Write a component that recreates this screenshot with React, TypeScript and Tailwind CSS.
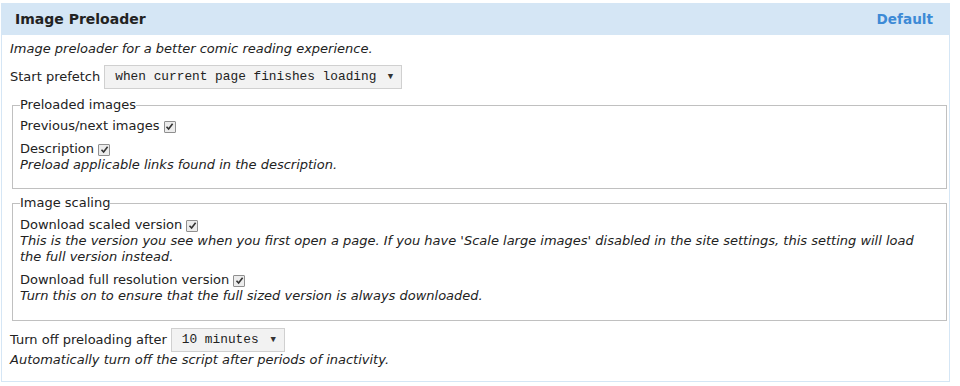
import React from "react";

function Check() {
  return (
    <span className="inline-flex items-center justify-center w-[12px] h-[12px] border border-[#8f8f8f] bg-[#ececec] rounded-[1px] align-[-1px]">
      <svg width="9" height="9" viewBox="0 0 9 9">
        <path d="M1.5 4.8 L3.6 7 L7.6 1.8" fill="none" stroke="#333" strokeWidth="1.6" />
      </svg>
    </span>
  );
}

function Select({ value, width }: { value: string; width: string }) {
  return (
    <span
      className={`inline-flex items-center justify-between h-[24px] border border-[#d0d0d0] bg-[#f2f2f2] pl-[10px] pr-[8px] text-[12.8px] text-[#222] ${width}`}
      style={{ fontFamily: '"Liberation Mono", "DejaVu Sans Mono", monospace' }}
    >
      <span>{value}</span>
      <span className="text-[9px] text-[#333]">▼</span>
    </span>
  );
}

export default function App() {
  return (
    <div
      className="bg-white w-[960px] h-[386px] pt-[3px] pl-[1px] text-[13px] text-[#222]"
      style={{ fontFamily: '"DejaVu Sans", Verdana, sans-serif' }}
    >
      <div className="w-[949px] h-[379px] border border-[#d5e6f5] border-t-0">
        {/* header */}
        <div className="h-[32px] bg-[#d5e6f5] flex items-center justify-between pl-[13px] pr-[16px] font-bold text-[14px]">
          <span className="text-[#222]">Image Preloader</span>
          <span className="text-[#3d8ad6] text-[13.6px]">Default</span>
        </div>

        <div className="pl-[8px] pr-[2px] pt-[6px] leading-[16px]">
          <p className="italic">Image preloader for a better comic reading experience.</p>

          <div className="flex items-center gap-[4px] mt-[8px]">
            <span>Start prefetch</span>
            <Select value="when current page finishes loading" width="w-[298px]" />
          </div>

          <fieldset className="border border-[#c0c0c0] mt-[8px] ml-[2px] pl-[7px] pb-[15px]">
            <legend className="px-0 ml-0">Preloaded images</legend>
            <div className="mt-[5px]">
              Previous/next images <Check />
            </div>
            <div className="mt-[7px]">
              Description <Check />
            </div>
            <p className="italic">Preload applicable links found in the description.</p>
          </fieldset>

          <fieldset className="border border-[#c0c0c0] mt-[6px] ml-[2px] pl-[7px] pb-[16px]">
            <legend className="px-0 ml-0">Image scaling</legend>
            <div className="mt-[6px]">
              Download scaled version <Check />
            </div>
            <p className="italic">
              This is the version you see when you first open a page. If you have 'Scale large images' disabled in the site settings, this setting will load
              <br />
              the full version instead.
            </p>
            <div className="mt-[7px]">
              Download full resolution version <Check />
            </div>
            <p className="italic">Turn this on to ensure that the full sized version is always downloaded.</p>
          </fieldset>

          <div className="flex items-center gap-[4px] mt-[7px]">
            <span>Turn off preloading after</span>
            <Select value="10 minutes" width="w-[114px]" />
          </div>
          <p className="italic mt-[0px]">Automatically turn off the script after periods of inactivity.</p>
        </div>
      </div>
    </div>
  );
}
